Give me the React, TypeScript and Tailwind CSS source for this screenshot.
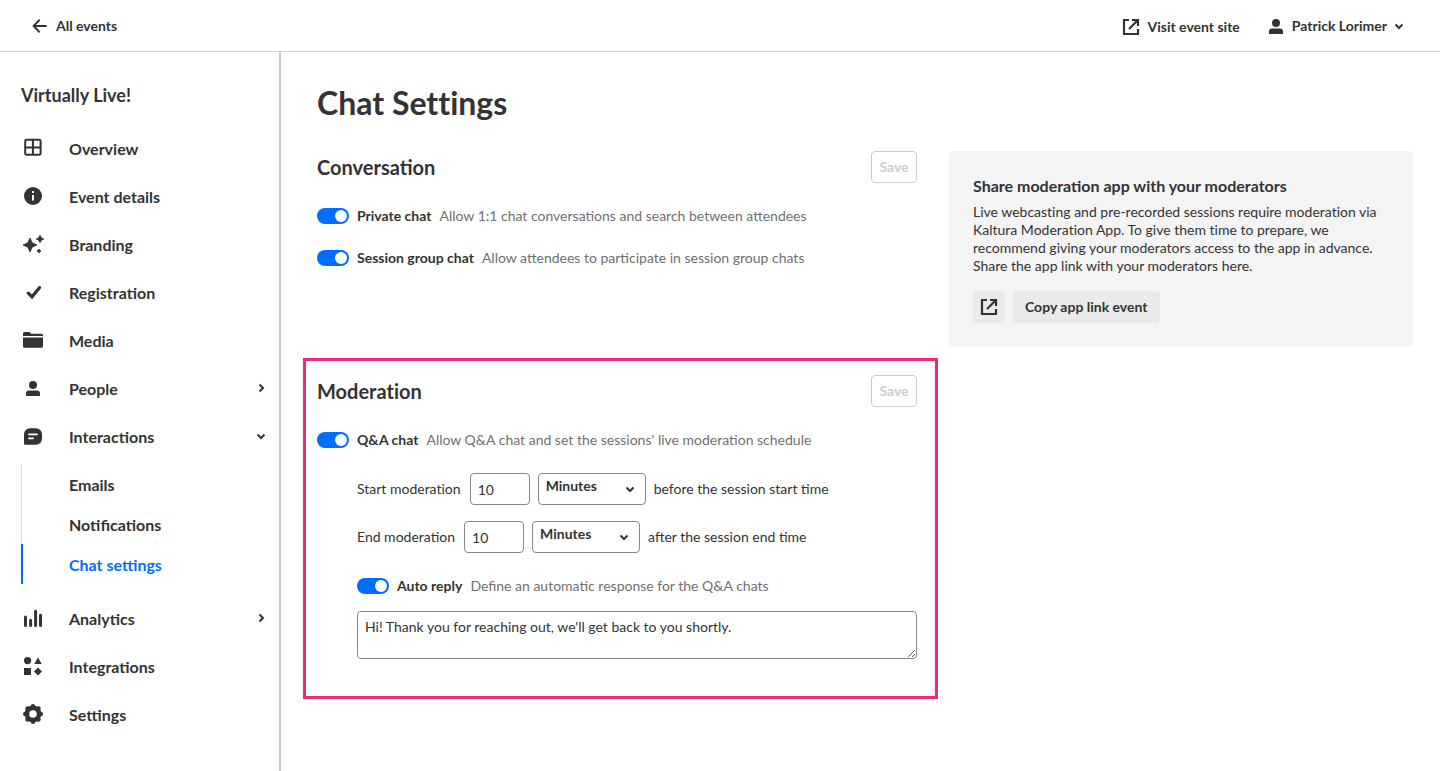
import { useState } from "react"
import type { ReactNode } from "react"

type IconProps = { className?: string; children: ReactNode }

const Icon = ({ className = "size-6", children }: IconProps) => (
  <svg viewBox="0 0 24 24" fill="currentColor" className={`shrink-0 ${className}`} aria-hidden="true">
    {children}
  </svg>
)

const GridIcon = () => (
  <Icon>
    <g fill="none" stroke="currentColor" strokeWidth="2">
      <rect x="4.2" y="3.8" width="15.4" height="15" rx="1.4" />
      <path d="M11.9 4v15M4 11.4h16" />
    </g>
  </Icon>
)

const InfoIcon = () => (
  <Icon>
    <circle cx="12" cy="12" r="9" />
    <path d="M11 7h2v2h-2zM11 11h2v5.500h-2z" fill="#fff" />
  </Icon>
)

const SparklesIcon = () => (
  <Icon>
    <path
      d="M9 6l2.200 4.800L16 13l-4.800 2.200L9 20l-2.200-4.800L2 13l4.800-2.200zM19 3.200l1.300 2.500L22.800 7l-2.500 1.300L19 10.800l-1.300-2.500L15.200 7l2.500-1.300zM18 17l.8 1.200 1.200.8-1.200.8L18 21l-.8-1.200L16 19l1.200-.8z"
      stroke="currentColor"
      strokeWidth=".8"
      strokeLinejoin="round"
    />
  </Icon>
)

const CheckIcon = () => (
  <Icon>
    <path d="M7.300 13.200l3.700 3.600L18.600 7.600" fill="none" stroke="currentColor" strokeWidth="3.200" strokeLinecap="round" />
  </Icon>
)

const FolderIcon = () => (
  <Icon>
    <path d="M2 8V5.500A1.500 1.500 0 013.500 4h5L10.300 5.800h10.200A1.500 1.500 0 0122 7.300V8zM2 9.400h20v8.800a1.600 1.600 0 01-1.600 1.600H3.600A1.600 1.600 0 012 18.200z" />
  </Icon>
)

const PersonIcon = () => (
  <Icon>
    <circle cx="12" cy="8.900" r="4" />
    <path d="M5 20v-2.200A3.200 3.200 0 018.200 14.600h7.600A3.200 3.200 0 0119 17.800V20z" />
  </Icon>
)

const ChatIcon = () => (
  <Icon>
    <path d="M3 10.300a6 6 0 016-6h6a6 6 0 016 6v4.400a6 6 0 01-6 6H4.200A1.200 1.200 0 013 19.500z" />
    <path d="M8 10.300h8M8 14.300h4" stroke="#fff" strokeWidth="1.800" strokeLinecap="round" />
  </Icon>
)

const BarsIcon = () => (
  <Icon>
    <path d="M4.500 11v8.500M9.600 14.300v5.200M14.600 5.200v14.300M19.500 9.200v10.300" stroke="currentColor" strokeWidth="3" strokeLinecap="round" />
  </Icon>
)

const ShapesIcon = () => (
  <Icon>
    <circle cx="6.600" cy="6.600" r="3.600" />
    <path d="M17 3.400l3.700 6.600h-7.400zM3 14.100h7v7H3zM17 13.500l4 4-4 4-4-4z" />
  </Icon>
)

const GearIcon = () => (
  <Icon>
    <circle cx="12" cy="12" r="6.100" fill="none" stroke="currentColor" strokeWidth="4.600" />
    <circle cx="12" cy="4.200" r="2.200" />
    <circle cx="12" cy="19.800" r="2.200" />
    <circle cx="4.200" cy="12" r="2.200" />
    <circle cx="19.800" cy="12" r="2.200" />
    <circle cx="6.500" cy="6.500" r="2.200" />
    <circle cx="17.500" cy="6.500" r="2.200" />
    <circle cx="6.500" cy="17.500" r="2.200" />
    <circle cx="17.500" cy="17.500" r="2.200" />
  </Icon>
)

const ArrowLeftIcon = () => (
  <Icon className="size-4">
    <path d="M22 12H3M11.500 2.500L2.500 12l9 9.500" fill="none" stroke="currentColor" strokeWidth="3" />
  </Icon>
)

const ExternalIcon = () => (
  <Icon>
    <path d="M10 5H5v14h14v-5M13 5h6v6M19 5l-9 9" fill="none" stroke="currentColor" strokeWidth="2.200" />
  </Icon>
)

const ChevronIcon = ({ right = false }: { right?: boolean }) => (
  <svg viewBox="0 0 12 12" className="size-3 shrink-0" aria-hidden="true">
    <path
      d={right ? "M4.500 2.500L8 6l-3.500 3.500" : "M2.500 4.500L6 8l3.500-3.500"}
      fill="none"
      stroke="currentColor"
      strokeWidth="2"
    />
  </svg>
)

type NavItem = {
  label: string
  icon: ReactNode
  expand?: "right" | "down"
  children?: string[]
}

const navItems: NavItem[] = [
  { label: "Overview", icon: <GridIcon /> },
  { label: "Event details", icon: <InfoIcon /> },
  { label: "Branding", icon: <SparklesIcon /> },
  { label: "Registration", icon: <CheckIcon /> },
  { label: "Media", icon: <FolderIcon /> },
  { label: "People", icon: <PersonIcon />, expand: "right" },
  {
    label: "Interactions",
    icon: <ChatIcon />,
    expand: "down",
    children: ["Emails", "Notifications", "Chat settings"],
  },
  { label: "Analytics", icon: <BarsIcon />, expand: "right" },
  { label: "Integrations", icon: <ShapesIcon /> },
  { label: "Settings", icon: <GearIcon /> },
]

const Sidebar = () => (
  <aside className="w-[281px] shrink-0 border-r-2 border-[#cccccc] pt-8">
    <h2 className="mb-[18px] pl-[21px] text-lg leading-[22px] font-bold">Virtually Live!</h2>
    <nav aria-label="Event">
      <ul>
        {navItems.map((item) => (
          <li key={item.label}>
            <a href="#" className="flex h-12 items-center gap-6 pr-3 pl-[21px] font-bold">
              {item.icon}
              <span className="flex-1 pt-0.5">{item.label}</span>
              {item.expand && <ChevronIcon right={item.expand === "right"} />}
            </a>
            {item.children && (
              <ul className="mt-1 mb-2.5 ml-[21px]">
                {item.children.map((child) => (
                  <li key={child}>
                    <a
                      href="#"
                      className={
                        child === "Chat settings"
                          ? "flex h-10 items-center border-l-2 border-[#006efa] pt-0.5 pl-[46px] font-bold text-[#006efa]"
                          : "flex h-10 items-center border-l border-[#dddddd] pt-0.5 pl-[47px] font-bold"
                      }
                    >
                      {child}
                    </a>
                  </li>
                ))}
              </ul>
            )}
          </li>
        ))}
      </ul>
    </nav>
  </aside>
)

const SaveButton = () => (
  <button
    type="button"
    disabled
    className="h-8 w-[46px] rounded border border-[#cccccc] text-sm font-bold text-[#cccccc]"
  >
    Save
  </button>
)

const Toggle = ({ label, description }: { label: string; description: string }) => {
  const [on, setOn] = useState(true)
  return (
    <label className="flex items-center gap-2 text-sm leading-[18px]">
      <input
        type="checkbox"
        role="switch"
        checked={on}
        onChange={(e) => setOn(e.target.checked)}
        className="flex h-4 w-8 shrink-0 appearance-none items-center rounded-full bg-[#999999] px-0.5 before:size-3 before:rounded-full before:bg-white checked:justify-end checked:bg-[#006efa]"
      />
      <span className="font-bold">{label}</span>
      <span className="text-[#707070]">{description}</span>
    </label>
  )
}

type ScheduleProps = { id: string; label: string; suffix: string; plain?: boolean }

const Schedule = ({ id, label, suffix, plain }: ScheduleProps) => (
  <div className="flex items-center gap-2 text-sm">
    <label htmlFor={id} className={plain ? "pr-px [font-variant-ligatures:none]" : "pr-px"}>
      {label}
    </label>
    <input id={id} type="text" defaultValue="10" className="h-8 w-[60px] rounded border border-[#888888] px-[7px]" />
    <div className="relative">
      <select
        aria-label={`${label} unit`}
        className="block h-8 w-[108px] appearance-none rounded border border-[#888888] px-[7px] pb-1.5 font-bold"
      >
        <option>Minutes</option>
        <option>Hours</option>
      </select>
      <span className="pointer-events-none absolute top-2.5 right-2.5">
        <ChevronIcon />
      </span>
    </div>
    <span>{suffix}</span>
  </div>
)

export default function App() {
  return (
    <div className="flex min-h-screen flex-col bg-white font-['Lato',sans-serif] text-[#333333]">
      <header className="flex h-[52px] items-center justify-between border-b border-[#cccccc] pr-[35px] pl-8 text-sm font-bold">
        <a href="#" className="flex items-center gap-2">
          <ArrowLeftIcon />
          All events
        </a>
        <div className="flex items-center gap-6">
          <a href="#" className="flex items-center gap-1 pt-0.5">
            <ExternalIcon />
            Visit event site
          </a>
          <button type="button" className="flex items-center gap-1">
            <PersonIcon />
            Patrick Lorimer
            <span className="pl-0.5">
              <ChevronIcon />
            </span>
          </button>
        </div>
      </header>

      <div className="flex flex-1">
        <Sidebar />
        <main className="flex-1 pt-[31px] pr-[27px] pb-8 pl-[22px]">
          <h1 className="mb-7 pl-[14px] text-[32px] leading-10 font-bold [font-variant-ligatures:none]">Chat Settings</h1>
          <div className="flex items-start gap-[11px]">
            <div className="w-[635px]">
              <section className="mb-[91px] pr-[21px] pl-[14px]">
                <div className="mb-6 flex items-center justify-between">
                  <h2 className="text-xl font-bold">Conversation</h2>
                  <SaveButton />
                </div>
                <div className="flex flex-col gap-6">
                  <Toggle label="Private chat" description="Allow 1:1 chat conversations and search between attendees" />
                  <Toggle label="Session group chat" description="Allow attendees to participate in session group chats" />
                </div>
              </section>

              <section className="border-3 border-[#ec297b] pt-[14px] pr-[18px] pb-[37px] pl-[11px]">
                <div className="mb-6 flex items-center justify-between">
                  <h2 className="text-xl font-bold [font-variant-ligatures:none]">Moderation</h2>
                  <SaveButton />
                </div>
                <Toggle label="Q&A chat" description="Allow Q&A chat and set the sessions' live moderation schedule" />
                <div className="mt-6 pl-10">
                  <div className="mb-6 flex flex-col gap-4">
                    <Schedule id="start" label="Start moderation" suffix="before the session start time" plain />
                    <Schedule id="end" label="End moderation" suffix="after the session end time" />
                  </div>
                  <Toggle label="Auto reply" description="Define an automatic response for the Q&A chats" />
                  <textarea
                    aria-label="Automatic response"
                    defaultValue="Hi! Thank you for reaching out, we'll get back to you shortly."
                    className="mt-4 block h-12 w-full rounded border border-[#888888] px-[7px] py-1.5 text-sm leading-[18px]"
                  />
                </div>
              </section>
            </div>

            <aside className="flex-1 rounded bg-[#f4f4f4] p-6">
              <h3 className="mb-1.5 leading-[22px] font-bold">Share moderation app with your moderators</h3>
              <p className="mb-4 text-sm leading-[18px] [font-variant-ligatures:none]">
                Live webcasting and pre-recorded sessions require moderation via Kaltura Moderation App. To give them time to
                prepare, we recommend giving your moderators access to the app in advance. Share the app link with your
                moderators here.
              </p>
              <div className="flex gap-2">
                <button
                  type="button"
                  aria-label="Open moderation app"
                  className="flex size-8 items-center justify-center rounded bg-[#eaeaea]"
                >
                  <ExternalIcon />
                </button>
                <button type="button" className="h-8 rounded bg-[#eaeaea] px-3 text-sm font-bold">
                  Copy app link event
                </button>
              </div>
            </aside>
          </div>
        </main>
      </div>
    </div>
  )
}
